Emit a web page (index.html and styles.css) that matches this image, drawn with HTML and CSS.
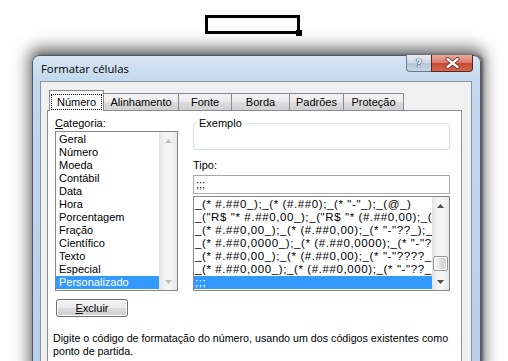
FILE: index.html
```html
<!DOCTYPE html>
<html lang="pt-BR">

<head>
  <meta charset="UTF-8" />
  <meta name="viewport" content="width=device-width, initial-scale=1.0" />
  <title>Formatar células</title>
  <link rel="stylesheet" href="styles.css">
</head>

<body>
  <div class="sheet">
    <div class="cell"></div>
  </div>

  <div class="window">
    <div class="titlebar">
      <span class="title">Formatar células</span>
      <div class="caption-btns">
        <span class="btn-help">?</span>
        <span class="btn-close">
          <svg width="15" height="12" viewBox="0 0 15 12">
            <path d="M2.5 2 L12.5 10 M12.5 2 L2.5 10" stroke="#6a2116" stroke-width="4" stroke-linecap="round" />
            <path d="M2.5 2 L12.5 10 M12.5 2 L2.5 10" stroke="#fff" stroke-width="2.4" stroke-linecap="round" />
          </svg>
        </span>
      </div>
    </div>

    <div class="client">
      <div class="tabs">
        <div class="tab active"><span class="focus">Número</span></div>
        <div class="tab t-alin">Alinhamento</div>
        <div class="tab t-fonte">Fonte</div>
        <div class="tab t-borda">Borda</div>
        <div class="tab t-padr">Padrões</div>
        <div class="tab t-prot">Proteção</div>
      </div>

      <div class="panel">
        <div class="columns">
          <div class="col-left">
            <div class="label"><u>C</u>ategoria:</div>
            <div class="listbox cat-list">
              <ul class="items">
                <li>Geral</li>
                <li>Número</li>
                <li>Moeda</li>
                <li>Contábil</li>
                <li>Data</li>
                <li>Hora</li>
                <li>Porcentagem</li>
                <li>Fração</li>
                <li>Científico</li>
                <li>Texto</li>
                <li>Especial</li>
                <li class="selected">Personalizado</li>
              </ul>
              <div class="scrollbar disabled">
                <span class="arrow"><svg width="7" height="4" viewBox="0 0 7 4"><polygon points="0,4 3.5,0 7,4" /></svg></span>
                <span class="track"></span>
                <span class="arrow"><svg width="7" height="4" viewBox="0 0 7 4"><polygon points="0,0 3.5,4 7,0" /></svg></span>
              </div>
            </div>
            <button class="btn-excluir"><u>E</u>xcluir</button>
          </div>

          <div class="col-right">
            <div class="groupbox"><span class="group-label">Exemplo</span></div>
            <div class="label tipo-label">Tipo:</div>
            <div class="textbox">;;;</div>
            <div class="listbox tipo-list">
              <ul class="items">
                <li>_(* #.##0_);_(* (#.##0);_(* "-"_);_(@_)</li>
                <li>_("R$ "* #.##0,00_);_("R$ "* (#.##0,00);_("R$ "* "-"??_);_(@_)</li>
                <li>_(* #.##0,00_);_(* (#.##0,00);_(* "-"??_);_(@_)</li>
                <li>_(* #.##0,0000_);_(* (#.##0,0000);_(* "-"??_);_(@_)</li>
                <li>_(* #.##0,00_);_(* (#.##0,00);_(* "-"????_);_(@_)</li>
                <li>_(* #.##0,000_);_(* (#.##0,000);_(* "-"??_);_(@_)</li>
                <li class="selected">;;;</li>
              </ul>
              <div class="scrollbar">
                <span class="arrow"><svg width="7" height="4" viewBox="0 0 7 4"><polygon points="0,4 3.5,0 7,4" /></svg></span>
                <span class="track"><span class="thumb"></span></span>
                <span class="arrow"><svg width="7" height="4" viewBox="0 0 7 4"><polygon points="0,0 3.5,4 7,0" /></svg></span>
              </div>
            </div>
          </div>
        </div>

        <p class="hint">Digite o código de formatação do número, usando um dos códigos existentes como<br>ponto de partida.</p>
      </div>
    </div>
  </div>
</body>

</html>
```

FILE: styles.css
```css
* {
  margin: 0;
  padding: 0;
  box-sizing: border-box;
}

html,
body {
  width: 100%;
  height: 100%;
}

body {
  background: #fff;
  overflow: hidden;
  font-family: "Liberation Sans", Arial, sans-serif;
  font-size: 11px;
  color: #000;
}

/* celula selecionada da planilha */
.sheet {
  height: 55px;
  padding-top: 15px;
}

.cell {
  position: relative;
  width: 95px;
  height: 19px;
  margin-left: 205px;
  border: 3px solid #000;
}

.cell::after {
  content: "";
  position: absolute;
  right: -5px;
  bottom: -5px;
  width: 6px;
  height: 6px;
  background: #000;
}

/* janela */
.window {
  width: 449px;
  height: 320px;
  margin-left: 32px;
  padding: 0 8px 0 7px;
  border: 1px solid #505a66;
  border-bottom: 0;
  border-radius: 7px 7px 0 0;
  background: linear-gradient(#d7e5f4, #c4d9ee 24px, #b8cfe8);
  box-shadow: 0 -4px 16px 3px rgba(0, 0, 0, 0.6), 2px 0 3px rgba(0, 0, 0, 0.45);
}

.titlebar {
  display: flex;
  align-items: flex-start;
  height: 25px;
}

.title {
  padding-left: 1px;
  font-family: "Open Sans", sans-serif;
  font-size: 11.3px;
  line-height: 25px;
}

.caption-btns {
  display: flex;
  margin: -1px -1px 0 auto;
}

.btn-help,
.btn-close {
  display: flex;
  align-items: center;
  justify-content: center;
  height: 17px;
}

.btn-help {
  width: 25px;
  border: 1px solid #6a788a;
  border-top: 0;
  border-right: 0;
  border-radius: 0 0 0 4px;
  background: linear-gradient(#e6edf5, #cdd8e5 50%, #b5c4d6 51%, #c9d6e4);
  color: #f7f9fb;
  font-family: "DejaVu Sans", sans-serif;
  font-weight: bold;
  font-size: 11px;
  text-shadow: 0 0 1px #334457, 0 0 1px #334457, 0 0 1px #334457;
}

.btn-close {
  width: 42px;
  border: 1px solid #5e231b;
  border-top: 0;
  border-radius: 0 0 4px 0;
  background: linear-gradient(#eaab9f, #d77a6b 50%, #c4472f 51%, #d26b52);
}

.client {
  height: 100%;
  padding: 8px 10px 0 6px;
  border: 1px solid #8393a6;
  border-bottom: 0;
  background: #f0f0f0;
}

/* abas */
.tabs {
  position: relative;
  z-index: 1;
  display: flex;
  align-items: flex-end;
  height: 20px;
  margin-left: 2px;
}

.tab {
  height: 17px;
  border: 1px solid #898c95;
  border-bottom: 0;
  background: linear-gradient(#f3f3f3, #ebebeb 50%, #dddddd 50%, #d0d0d0);
  line-height: 16px;
  text-align: center;
}

.tab + .tab {
  margin-left: -1px;
}

.tab.active {
  position: relative;
  z-index: 2;
  width: 55px;
  height: 21px;
  margin-bottom: -1px;
  background: #fff;
}

.tab .focus {
  display: block;
  height: 16px;
  margin: 3px 1px 0;
  border: 1px dotted #000;
  line-height: 14px;
}

.t-alin { width: 76px; }
.t-fonte { width: 54px; }
.t-borda { width: 59px; }
.t-padr { width: 55px; }
.t-prot { width: 61px; }

.panel {
  width: 415px;
  height: 260px;
  border: 1px solid #898c95;
  background: #fff;
}

.columns {
  display: flex;
  gap: 15px;
  padding: 6px 0 0 7px;
}

.col-left {
  width: 123px;
}

.col-right {
  width: 257px;
}

.label {
  line-height: 13px;
}

/* listas */
.listbox {
  display: flex;
  border: 1px solid #828790;
  background: #fff;
}

.items {
  flex: 1;
  min-width: 0;
  overflow: hidden;
  padding-top: 1px;
  list-style: none;
}

.items li {
  height: 13px;
  line-height: 13px;
  white-space: nowrap;
}

.items li.selected {
  background: #3399ff;
  color: #fff;
}

.cat-list {
  height: 160px;
  margin-top: 1px;
}

.cat-list .items li {
  padding-left: 3px;
}

.tipo-list {
  height: 95px;
  margin-top: 2px;
}

.tipo-list .items li {
  padding-left: 1px;
  font-size: 11.5px;
  letter-spacing: 0.6px;
}

.scrollbar {
  display: flex;
  flex-direction: column;
  width: 17px;
  background: linear-gradient(to right, #e4e4e4, #f4f4f4 35%, #f4f4f4 65%, #e6e6e6);
}

.cat-list .scrollbar {
  width: 18px;
}

.scrollbar .arrow {
  display: flex;
  align-items: center;
  justify-content: center;
  height: 17px;
}

.scrollbar .arrow polygon {
  fill: #4e4e4e;
}

.scrollbar.disabled .arrow polygon {
  fill: #bdbdbd;
}

.scrollbar .track {
  flex: 1;
  padding: 0 1px;
}

.thumb {
  display: block;
  height: 15px;
  margin-top: 42px;
  border: 1px solid #979797;
  border-radius: 2px;
  background: linear-gradient(to right, #f5f5f5, #e4e4e4 50%, #d5d5d5 51%, #dedede);
  box-shadow: inset 0 0 0 1px #fff;
}

.btn-excluir {
  display: block;
  width: 72px;
  height: 18px;
  margin: 8px 0 0 1px;
  border: 1px solid #707070;
  border-radius: 3px;
  background: linear-gradient(#f2f2f2, #ebebeb 50%, #dddddd 50%, #cfcfcf);
  box-shadow: inset 0 0 0 1px #fcfcfc;
  font: inherit;
  color: #000;
}

/* lado direito */
.groupbox {
  position: relative;
  height: 27px;
  margin-top: 6px;
  border: 1px solid #d5dfe5;
  border-radius: 3px;
}

.group-label {
  position: absolute;
  top: -7px;
  left: 3px;
  padding: 0 2px;
  background: #fff;
  line-height: 13px;
}

.tipo-label {
  margin-top: 9px;
}

.textbox {
  height: 19px;
  margin-top: 3px;
  padding-left: 2px;
  border: 1px solid #abadb3;
  border-top-color: #a0a4ab;
  line-height: 17px;
}

.hint {
  margin-top: 15px;
  padding-left: 5px;
  font-size: 10.7px;
  line-height: 13px;
  white-space: nowrap;
}
```
